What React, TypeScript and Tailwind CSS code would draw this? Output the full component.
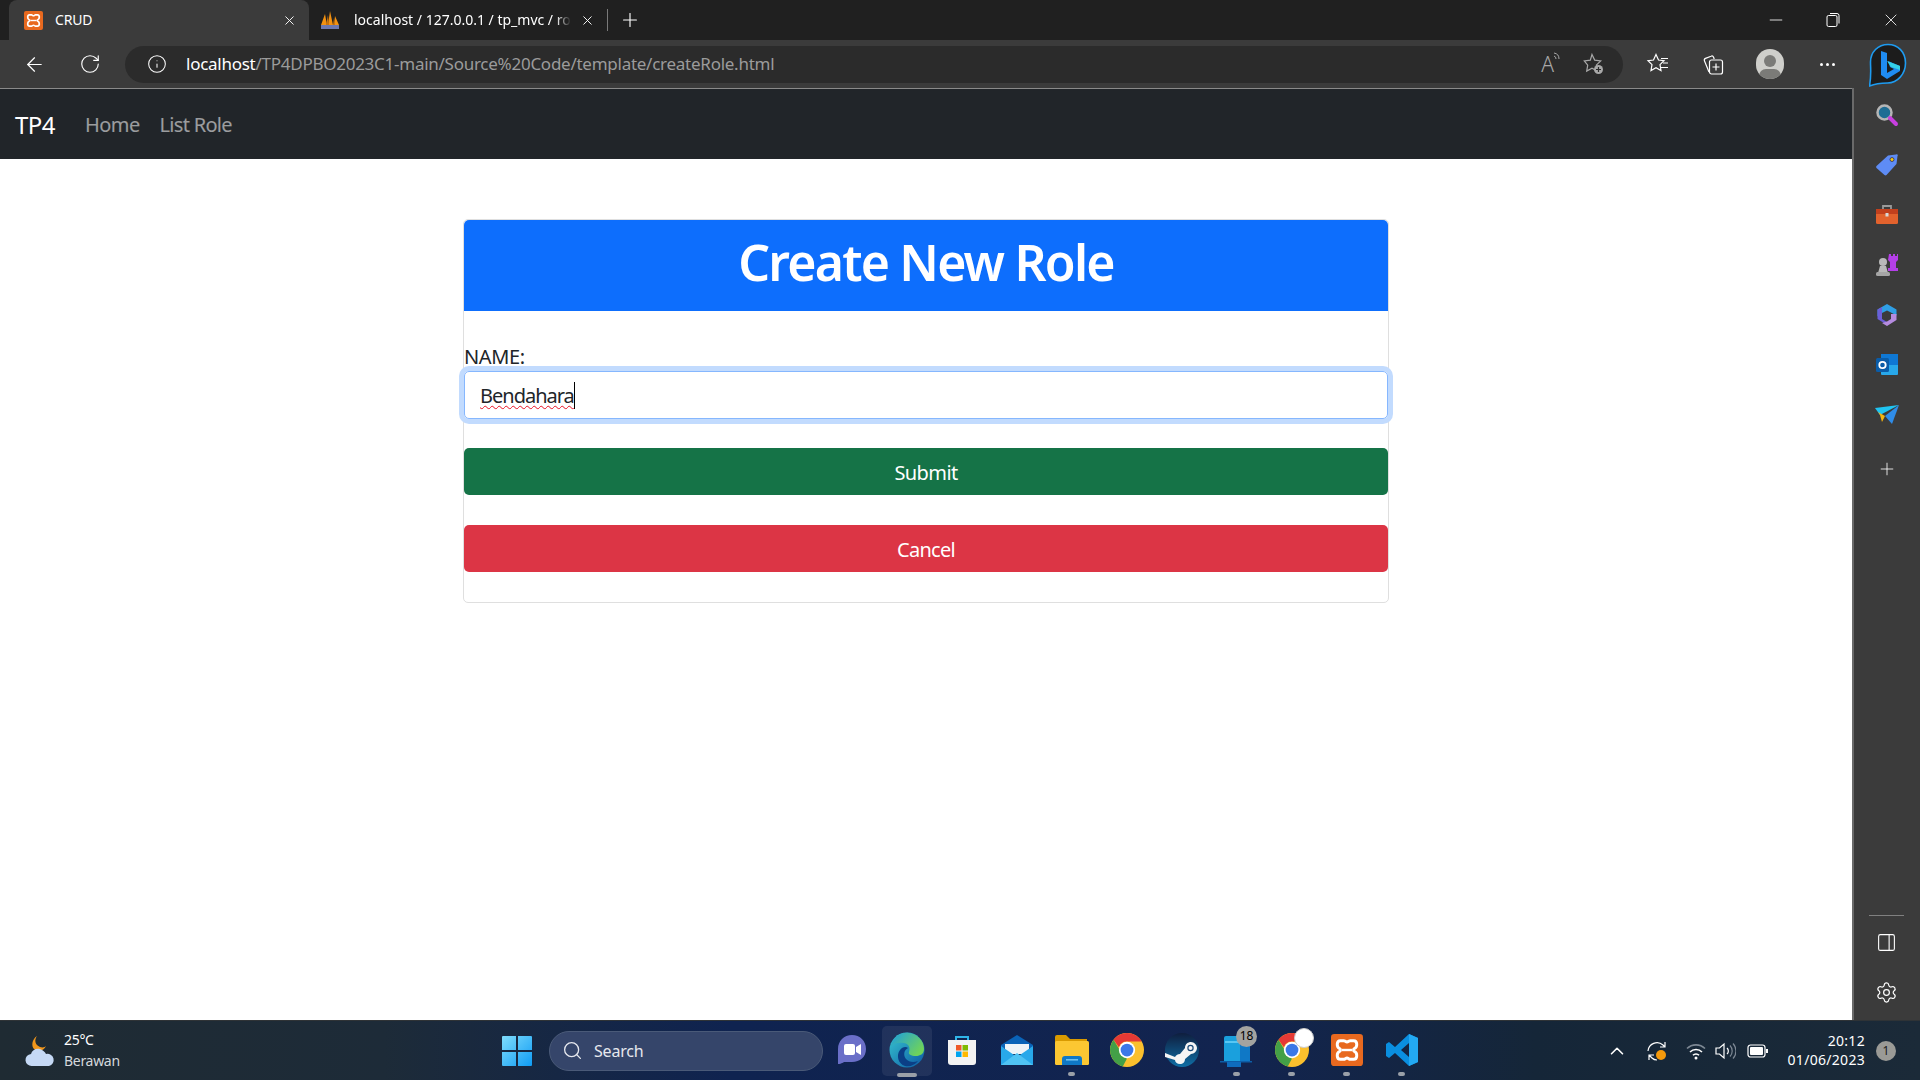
// App.tsx
import { ArrowLeft, RotateCw, Info, X, Plus, Minus, PanelRight, Settings, Search, ChevronUp } from 'lucide-react';

const sans = '[font-family:"Noto_Sans","Open_Sans",sans-serif]';

// xampp logo, used in the tab and in the taskbar
const Xampp = ({ size }: { size: number }) => (
  <svg width={size} height={size} viewBox="0 0 24 24">
    <rect width="24" height="24" rx="2.500" fill="#e8691f" />
    <path d="M7 5h2.500c1 0 1.500 1 2.500 1s1.500-1 2.500-1H17c3 0 3 5 .5 6-.7.3-.7 1.700 0 2 2.500 1 2.500 6-.5 6h-2.500c-1 0-1.500-1-2.500-1s-1.500 1-2.500 1H7c-3 0-3-5-.5-6 .7-.3.7-1.700 0-2C4 10 4 5 7 5z" fill="none" stroke="#fff" strokeWidth="2.200" strokeLinejoin="round" />
    <path d="M8 12h8" stroke="#fff" strokeWidth="1.800" />
  </svg>
);

const Pma = () => (
  <svg width="20" height="20" viewBox="0 0 20 20">
    <path d="M1 15 5 4l2 11zM8 15l2-14 3 14zM14 15l1-9 4 9z" fill="#f29111" />
    <path d="M6 15 8 5l1 10zM13 15l1-7 1 7z" fill="#c9720b" />
    <rect x="1" y="15" width="18" height="4" fill="#6c78af" />
  </svg>
);

const ChromeIcon = ({ size = 34 }: { size?: number }) => (
  <svg width={size} height={size} viewBox="0 0 48 48">
    <circle cx="24" cy="24" r="24" fill="#fbc02d" />
    <path d="M24 0a24 24 0 0 1 20.8 12H24a12 12 0 0 0-11.400 8.200L5 9.500A24 24 0 0 1 24 0z" fill="#e53935" />
    <path d="M5 9.500 16 28a10 10 0 0 0 8 8l-6 11.300A24 24 0 0 1 5 9.500z" fill="#43a047" />
    <circle cx="24" cy="24" r="11.500" fill="#fff" />
    <circle cx="24" cy="24" r="9" fill="#3b78e7" />
  </svg>
);

const EdgeIcon = () => (
  <svg width="36" height="36" viewBox="0 0 36 36">
    <defs>
      <linearGradient id="edgeA" x1="0" y1="0" x2="1" y2="1">
        <stop offset="0" stopColor="#37c6d0" />
        <stop offset="1" stopColor="#0c59a4" />
      </linearGradient>
      <linearGradient id="edgeB" x1="0" y1="0" x2="1" y2="0.6">
        <stop offset="0" stopColor="#1b9de2" />
        <stop offset="1" stopColor="#6fd35a" />
      </linearGradient>
    </defs>
    <circle cx="18" cy="18" r="17.500" fill="url(#edgeA)" />
    <path d="M2 14C5 3 14 0 20 1c9 1 15 8 15 16 0 5-4 7-8 7-5 0-8-2-7-4 1-3 1-8-5-9C10 10 5 11 2 14z" fill="url(#edgeB)" />
    <path d="M16 34c-7-2-9-11-5-16 2-3 6-4 8-2-4 2-5 7-2 11 3 3 7 4 12 2-3 4-8 6-13 5z" fill="#0b3f86" />
  </svg>
);

const StoreIcon = () => (
  <svg width="32" height="32" viewBox="0 0 32 32">
    <path d="M10 7V3h12v4" fill="none" stroke="#2fb5e8" strokeWidth="2" />
    <path d="M2 6h28v22a3 3 0 0 1-3 3H5a3 3 0 0 1-3-3z" fill="#f3f3f3" />
    <rect x="10" y="11" width="5.500" height="5.500" fill="#ef5a29" />
    <rect x="16.500" y="11" width="5.500" height="5.500" fill="#7fba00" />
    <rect x="10" y="17.500" width="5.500" height="5.500" fill="#00a4ef" />
    <rect x="16.500" y="17.500" width="5.500" height="5.500" fill="#ffb900" />
  </svg>
);

const MailIcon = () => (
  <svg width="34" height="32" viewBox="0 0 34 32">
    <path d="M1 11 17 1l16 10v3H1z" fill="#0a63b8" />
    <path d="M5 10h24v10H5z" fill="#eef4f8" />
    <path d="M1 12l16 11 16-11v19H1z" fill="#28a8ea" />
    <path d="M1 31 17 19l16 12z" fill="#50c3f3" />
  </svg>
);

const FolderIcon = () => (
  <svg width="34" height="32" viewBox="0 0 34 32">
    <path d="M0 3a2 2 0 0 1 2-2h9l4 4h17v6H0z" fill="#d99a00" />
    <rect y="7" width="34" height="24" rx="1.500" fill="#fcc732" />
    <path d="M7 31v-6a3 3 0 0 1 3-3h14a3 3 0 0 1 3 3v6z" fill="#0f78c6" />
    <rect x="11" y="25" width="12" height="1.600" fill="#6cc0f0" />
  </svg>
);

const SteamIcon = () => (
  <svg width="34" height="34" viewBox="0 0 34 34">
    <defs>
      <linearGradient id="steamBg" x1="0" y1="0" x2="0" y2="1">
        <stop offset="0" stopColor="#0f1e3e" />
        <stop offset="1" stopColor="#0f6ea5" />
      </linearGradient>
    </defs>
    <circle cx="17" cy="17" r="17" fill="url(#steamBg)" />
    <path d="M0 20l10 4c1-2 3-3 5-3l5-6c0-4 3-6 6-6s6 3 6 6-3 6-6 6l-6 5c0 3-2 5-5 5s-5-2-5-4L0 24z" fill="#f5f5f5" />
    <circle cx="25.500" cy="15" r="3.200" fill="#1a4a78" />
    <circle cx="25.500" cy="15" r="2" fill="#f5f5f5" />
  </svg>
);

const TasksIcon = () => (
  <svg width="34" height="34" viewBox="0 0 34 34">
    <path d="M4 5a2 2 0 0 1 2-2h12l2 3v22H4z" fill="#1aa0dd" />
    <rect x="20" y="12" width="10" height="16" fill="#0f78c6" />
    <rect x="5" y="8" width="14" height="2" fill="#58c7f3" />
    <path d="M0 28h32v1.500H0z" fill="#0d5ea8" />
    <rect x="7" y="29" width="14" height="5" fill="#0f6cbd" />
  </svg>
);

const VsCode = () => (
  <svg width="34" height="34" viewBox="0 0 34 34">
    <path d="M24 1 33 5v24l-9 4-14-13-6 5-3-2V11l3-2 6 5zM24 10l-8 7 8 7z" fill="#0a8fe0" />
    <path d="M24 1 33 5v24l-9 4z" fill="#23a9f2" />
  </svg>
);

const BingIcon = () => (
  <svg width="38" height="46" viewBox="0 0 38 46">
    <path d="M19 1.500C9 1.500 1.500 9 1.500 19c0 7 1 13-1 24 5-2 10-3 18-3 10 0 18-9 18-20C36.500 9 29 1.500 19 1.500z" fill="#1c1c1c" stroke="#1e9bf0" strokeWidth="1.600" />
    <path d="M12 8l6 2v20l7-4-4-2-2-6 12 5v5l-13 8-6-4z" fill="#1f8cf2" />
    <path d="M18 18l13 5v4l-9-3z" fill="#34d1e6" />
  </svg>
);

const TaskIcon = ({ children, dot }: { children: React.ReactNode; dot?: boolean }) => (
  <div className="relative flex h-[60px] w-[55px] items-center justify-center pb-[2px]">
    {children}
    {dot && <span className="absolute bottom-[5px] left-[24px] h-[4px] w-[7px] rounded-full bg-[#9aa0a8]" />}
  </div>
);

// extension buttons in the edge sidebar
const sideIcons = [
  <svg key="search" width="24" height="24" viewBox="0 0 24 24">
    <circle cx="9.500" cy="9.500" r="7" fill="#1f6d94" stroke="#b5b5b5" strokeWidth="2.500" />
    <path d="M15 15l6 6" stroke="#c83fe0" strokeWidth="4" strokeLinecap="round" />
  </svg>,
  <svg key="tag" width="24" height="24" viewBox="0 0 24 24">
    <path d="M13 2.500 21 1.500a1 1 0 0 1 1.500 1.500l-1 8-10 11a1.500 1.500 0 0 1-2 0l-8-7a1.500 1.500 0 0 1 0-2z" fill="#5e8cf5" />
    <circle cx="17" cy="6.500" r="2" fill="#f2c811" stroke="#2a2a60" strokeWidth="0.800" />
  </svg>,
  <svg key="tool" width="24" height="24" viewBox="0 0 24 24">
    <path d="M8 6V3h8v3" fill="none" stroke="#9a9a9a" strokeWidth="1.800" />
    <rect x="1" y="6" width="22" height="15" rx="1.500" fill="#e2622d" />
    <rect x="1" y="6" width="22" height="5" fill="#c2401d" />
    <rect x="10.500" y="10" width="3" height="3.500" fill="#d8d8d8" />
  </svg>,
  <svg key="chess" width="24" height="24" viewBox="0 0 24 24">
    <path d="M14 1h2v2h2V1h2v2h2V1h1v6l-2 2v6h2v3H13v-3h2V9l-2-2z" fill="#b43fe8" />
    <circle cx="8" cy="9" r="4" fill="#b9b9b9" />
    <path d="M5 13h6l2 7H3z" fill="#b9b9b9" />
    <rect x="1" y="19" width="14" height="4" rx="1.500" fill="#a5a5a5" />
  </svg>,
  <svg key="office" width="24" height="24" viewBox="0 0 24 24">
    <path d="M12 1 21.500 6.500v6L15 9l-3-1.500L7 10v6l-4.500-3V6.500z" fill="#2f9fe5" />
    <path d="M2.500 6.500 7 4v12l5 3-3 1-6.500-4z" fill="#6c5fd8" />
    <path d="M21.500 11v6L12 23l-5-3 5-1.500 4-2.500v-5z" fill="#b58be0" />
  </svg>,
  <svg key="outlook" width="24" height="24" viewBox="0 0 24 24">
    <rect x="6" y="1" width="17" height="11" fill="#0f78d4" />
    <path d="M6 12h17v9a1 1 0 0 1-1 1H7a1 1 0 0 1-1-1z" fill="#28a8ea" />
    <rect x="1" y="5" width="13" height="14" rx="1.500" fill="#0a5ca8" />
    <circle cx="7.500" cy="12" r="3.200" fill="none" stroke="#fff" strokeWidth="1.800" />
  </svg>,
  <svg key="send" width="24" height="20" viewBox="0 0 24 20">
    <path d="M0 3 24 0 5 10z" fill="#1fc4f2" />
    <path d="M24 0 10 11l7 8z" fill="#2f8ce8" />
    <path d="M3 7l2 3 2 7 3-6z" fill="#f5b50f" />
  </svg>,
];

const App = () => {
  return (
    <div className={`flex h-screen w-[1920px] flex-col overflow-hidden bg-white ${sans}`}>
      {/* tab strip */}
      <div className="flex h-[40px] shrink-0 items-center bg-[#202020] pl-[9px]">
        <div className="flex h-[40px] w-[300px] items-center rounded-t-[8px] bg-[#3b3b3b] pl-[15px] pr-[11px] text-white">
          <Xampp size={19} />
          <span className="ml-[12px] flex-1 pb-[2px] text-[14px] tracking-[-0.2px]">CRUD</span>
          <X size={15} strokeWidth={1.5} className="mr-[1px]" />
        </div>
        <div className="flex h-[40px] w-[290px] items-center pl-[11px] pr-[4px] text-white">
          <Pma />
          <span className="ml-[14px] whitespace-nowrap pb-[2px] text-[14px] [mask-image:linear-gradient(to_right,black_93%,transparent)]">
            localhost / 127.0.0.1 / tp_mvc / ro
          </span>
          <X size={15} strokeWidth={1.500} className="ml-auto" />
        </div>
        <div className="ml-[8px] h-[22px] w-px bg-[#7a7a7a]" />
        <Plus size={22} strokeWidth={1.25} className="ml-[11px] text-white" />
        <div className="flex-1" />
        <div className="flex items-center gap-[38px] pr-[19px] text-white">
          <Minus size={20} strokeWidth={1} className="translate-x-[1px]" />
          <svg width="20" height="20" viewBox="0 0 20 20" fill="none" stroke="#fff" strokeWidth="1">
            <rect x="4" y="5.500" width="10" height="11" rx="1.500" />
            <path d="M7 3.500h7a2 2 0 0 1 2 2v8" />
          </svg>
          <X size={20} strokeWidth={1} />
        </div>
      </div>

      {/* toolbar */}
      <div className="flex h-[48px] shrink-0 items-center bg-[#3b3b3b] pl-[23px] text-white">
        <ArrowLeft size={23} strokeWidth={1.25} />
        <RotateCw size={22} strokeWidth={1.25} className="ml-[33px]" />
        <div className="ml-[24px] flex h-[37px] w-[1498px] items-center rounded-full bg-[#2b2b2b] pl-[22px] pr-[18px]">
          <Info size={20} strokeWidth={1.25} />
          <div className="ml-[19px] flex-1 whitespace-nowrap text-[17px] tracking-[-0.26px]">
            localhost<span className="text-[#9b9b9b]">/TP4DPBO2023C1-main/Source%20Code/template/createRole.html</span>
          </div>
          <div className="flex items-start text-[#a8a8a8]">
            <span className="text-[21px] font-light leading-[24px]">A</span>
            <svg className="-ml-[1px]" width="8" height="12" viewBox="0 0 8 12" fill="none" stroke="#a8a8a8" strokeWidth="1">
              <path d="M1 4a3 3 0 0 1 2 3M1 1a6 6 0 0 1 5 6" />
            </svg>
          </div>
          <svg className="ml-[20px]" width="24" height="24" viewBox="0 0 24 24" fill="none" stroke="#a8a8a8" strokeWidth="1.200">
            <path d="M11 2.500l2.700 5.600 6 .8-4.400 4.200 1 6-5.300-2.800-5.300 2.800 1-6L3.300 8.900l6-.8z" />
            <circle cx="17.500" cy="17.500" r="4.500" fill="#a8a8a8" stroke="none" />
            <path d="M17.500 15v5M15 17.500h5" stroke="#2b2b2b" />
          </svg>
        </div>
        <svg className="ml-[23px]" width="24" height="24" viewBox="0 0 24 24" fill="none" stroke="#fff" strokeWidth="1.200">
          <path d="M10 2.500l2.500 5.500 5.500.7-4 4 1 5.800-5-2.800L5 18.500l1-5.800-4-4 5.500-.7z" />
          <path d="M15 6.500h7M17 11h5M15 15.500h7" />
        </svg>
        <svg className="ml-[31px]" width="24" height="24" viewBox="0 0 24 24" fill="none" stroke="#fff" strokeWidth="1.200">
          <path d="M8 20 3.500 9a2 2 0 0 1 1-2.600L10 4.200a2 2 0 0 1 2.600 1l.6 1.800" />
          <rect x="8.500" y="8" width="13" height="14" rx="2" />
          <path d="M15 11.500v7M11.500 15h7" />
        </svg>
        <div className="relative ml-[31px] h-[30px] w-[28px] overflow-hidden rounded-full bg-[#cfcfcb]">
          <div className="absolute left-[8px] top-[6px] h-[12px] w-[12px] rounded-full bg-[#7b7b78]" />
          <div className="absolute left-[3px] top-[20px] h-[14px] w-[22px] rounded-full bg-[#7b7b78]" />
        </div>
        <div className="ml-[36px] flex gap-[3px]">
          <span className="h-[3px] w-[3px] rounded-full bg-white" />
          <span className="h-[3px] w-[3px] rounded-full bg-white" />
          <span className="h-[3px] w-[3px] rounded-full bg-white" />
        </div>
        <div className="ml-[34px] pt-[3px]">
          <BingIcon />
        </div>
      </div>

      {/* page + sidebar */}
      <div className="flex min-h-0 flex-1">
        <div className="flex-1 border-t border-[#8a8a8a]">
          <nav className="flex h-[70px] items-center bg-[#212529] pl-[15px] pt-[1px]">
            <span className="text-[24px] tracking-[-0.5px] text-white">TP4</span>
            <span className="ml-[30px] text-[20px] tracking-[-0.6px] text-white/55">Home</span>
            <span className="ml-[20px] text-[20px] tracking-[-0.7px] text-white/55">List Role</span>
          </nav>
          <div className="mx-auto mt-[60px] w-[926px] rounded-[5px] border border-[#dfdfdf] pb-[30px]">
            <div className="flex h-[91px] justify-center rounded-t-[5px] bg-[#0d6efd] pt-[12px] text-[50px] font-semibold leading-[60px] tracking-[-1.8px] text-white">
              Create New Role
            </div>
            <label className="mt-[30px] block h-[30px] pt-[1px] text-[20px] leading-[30px] tracking-[-0.4px] text-[#212529]">NAME:</label>
            <div className="flex h-[48px] items-center rounded-[5px] border border-[#86b7fe] px-[15px] pt-[1px] text-[20px] tracking-[-1px] text-[#212529] shadow-[0_0_0_5px_#c2dbfe]">
              <span className="underline decoration-[#e81123] decoration-wavy decoration-1 underline-offset-[2px]">Bendahara</span>
              <span className="h-[27px] w-px bg-black" />
            </div>
            <div className="mt-[29px] flex h-[47px] items-center justify-center rounded-[5px] bg-[#157347] pt-[3px] text-[20px] tracking-[-0.6px] text-white">Submit</div>
            <div className="mt-[30px] flex h-[47px] items-center justify-center rounded-[5px] bg-[#dc3545] pt-[3px] text-[20px] tracking-[-0.7px] text-white">Cancel</div>
          </div>
        </div>
        <aside className="flex w-[68px] shrink-0 flex-col items-center border-l-2 border-[#6a6a6a] bg-[#3b3b3b] pr-[1px] pt-[2px] text-white">
          {sideIcons.map((icon) => (
            <div key={icon.key} className="flex h-[50px] w-full items-center justify-center">{icon}</div>
          ))}
          <Plus size={20} strokeWidth={1} className="mt-[19px]" />
          <div className="flex-1" />
          <div className="h-px w-[35px] bg-[#808080]" />
          <PanelRight size={21} strokeWidth={1.25} className="mt-[16px]" />
          <Settings size={23} strokeWidth={1.25} className="mb-[16px] mt-[28px]" />
        </aside>
      </div>

      {/* windows taskbar */}
      <div className="flex h-[60px] shrink-0 items-center border-t border-[#2f3336] bg-[linear-gradient(90deg,#1f2b33_0%,#1d2b38_20%,#0f2350_38%,#12244f_65%,#152638_80%,#1b2a38_100%)] text-white">
        <svg className="ml-[24px]" width="32" height="32" viewBox="0 0 32 32">
          <path d="M13 1c-3 4-2 9 3 11 3 1 5 0 6-1-2 5-8 6-12 3C7 11 8 4 13 1z" fill="#f0961c" />
          <path d="M8 31a6 6 0 0 1-1-12c1-4 5-6 9-5 3 1 5 3 6 5a6 6 0 0 1 3 12z" fill="#c5d9f5" />
        </svg>
        <div className="ml-[8px] w-[76px] pb-[2px] text-[14px] leading-[21px] tracking-[-0.3px]">
          <div>25°C</div>
          <div className="text-[#d4d8dc]">Berawan</div>
        </div>
        <svg className="ml-[362px]" width="30" height="30" viewBox="0 0 30 30">
          <defs>
            <linearGradient id="win" x1="0" y1="0" x2="1" y2="1">
              <stop offset="0" stopColor="#7fdcfb" />
              <stop offset="1" stopColor="#0f9cf5" />
            </linearGradient>
          </defs>
          <path d="M0 1a1 1 0 0 1 1-1h13v14H0zM16 0h13a1 1 0 0 1 1 1v13H16zM0 16h14v14H1a1 1 0 0 1-1-1zM16 16h14v13a1 1 0 0 1-1 1H16z" fill="url(#win)" />
        </svg>
        <div className="ml-[17px] flex h-[40px] w-[274px] items-center rounded-full border border-[#4a5a78] bg-[#35456a] pl-[12px] text-[#e6e8ee]">
          <Search size={21} strokeWidth={1.5} />
          <span className="ml-[11px] text-[16px] tracking-[-0.2px]">Search</span>
        </div>
        <div className="ml-[1px] flex">
          <TaskIcon>
            <svg width="30" height="32" viewBox="0 0 30 32">
              <path d="M15 1C7 1 1 7 1 15v15c4 0 5-2 7-2h7c8 0 14-5 14-13S23 1 15 1z" fill="#6a6fc8" />
              <rect x="7" y="10" width="11" height="11" rx="2" fill="#fff" />
              <path d="M19 13l5-3v11l-5-3z" fill="#fff" />
            </svg>
          </TaskIcon>
          <div className="relative flex h-[60px] w-[55px] items-center justify-center pb-[2px]">
            <div className="absolute left-[3px] top-[5px] h-[50px] w-[50px] rounded-[5px] bg-white/[0.07]" />
            <div className="relative"><EdgeIcon /></div>
            <span className="absolute bottom-[4px] left-[18px] h-[4px] w-[20px] rounded-full bg-[#9aa0a8]" />
          </div>
          <TaskIcon><StoreIcon /></TaskIcon>
          <TaskIcon><MailIcon /></TaskIcon>
          <TaskIcon dot><FolderIcon /></TaskIcon>
          <TaskIcon><ChromeIcon /></TaskIcon>
          <TaskIcon><SteamIcon /></TaskIcon>
          <TaskIcon dot>
            <TasksIcon />
            <span className="absolute left-[27px] top-[5px] flex h-[21px] w-[21px] items-center justify-center rounded-full bg-[#a3a3a0] text-[12px] text-black">18</span>
          </TaskIcon>
          <TaskIcon dot>
            <ChromeIcon />
            <span className="absolute left-[30px] top-[7px] h-[20px] w-[20px] rounded-full border border-[#ccc] bg-white" />
          </TaskIcon>
          <TaskIcon dot><Xampp size={32} /></TaskIcon>
          <TaskIcon dot><VsCode /></TaskIcon>
        </div>
        <ChevronUp size={22} strokeWidth={1.75} className="ml-[177px]" />
        <svg className="ml-[18px]" width="22" height="22" viewBox="0 0 22 22" fill="none" stroke="#fff" strokeWidth="1.200">
          <path d="M2 11a9 9 0 0 1 15-6l2 2M19 2v5h-5" />
          <path d="M3 15l3 3c1 1 3 2 5 2M3 20v-5h5" />
          <circle cx="15" cy="15" r="5" fill="#f59a0c" stroke="none" />
        </svg>
        {/* wifi and speaker: outer arcs are dimmed */}
        <svg className="ml-[18px]" width="20" height="18" viewBox="0 0 20 18" fill="none" strokeWidth="1.600">
          <path d="M1 6.500a13 13 0 0 1 18 0" stroke="#7d8894" />
          <path d="M4 10a8.500 8.500 0 0 1 12 0M7 13.300a4 4 0 0 1 6 0" stroke="#fff" />
          <circle cx="10" cy="16" r="1.500" fill="#fff" />
        </svg>
        <svg className="ml-[9px]" width="21" height="20" viewBox="0 0 21 20" fill="none" strokeWidth="1.200">
          <path d="M1 7h3.500L9 3v14l-4.500-4H1z" stroke="#fff" />
          <path d="M12 7a4 4 0 0 1 0 6" stroke="#fff" />
          <path d="M15 4.500a8 8 0 0 1 0 11M18 2.500a11 11 0 0 1 0 15" stroke="#7d8894" />
        </svg>
        <svg className="ml-[11px]" width="22" height="16" viewBox="0 0 22 16" fill="none">
          <rect x="1" y="2" width="17" height="12" rx="2.500" stroke="#fff" strokeWidth="1.200" />
          <rect x="3" y="4" width="13" height="8" rx="1" fill="#fff" />
          <rect x="19" y="6" width="2" height="4" fill="#fff" />
        </svg>
        <div className="ml-[7px] w-[89px] pb-[1px] text-right text-[14px] leading-[19px] tracking-[0.3px]">
          <div>20:12</div>
          <div>01/06/2023</div>
        </div>
        <span className="ml-[11px] flex h-[20px] w-[20px] items-center justify-center rounded-full bg-[#9a9a96] text-[12px] text-[#1a1a1a]">1</span>
      </div>
    </div>
  );
};

export default App;
